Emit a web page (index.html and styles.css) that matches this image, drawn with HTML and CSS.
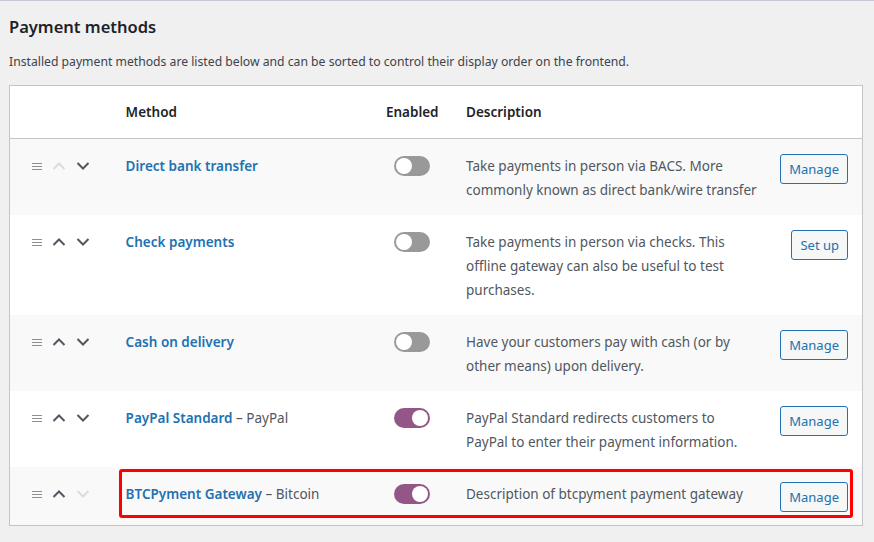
FILE: index.html
```html
<!DOCTYPE html>
<html>
<head>
<meta charset="utf-8">
<link rel="stylesheet" href="styles.css">
</head>
<body>
<div class="page">
  <h2 class="title">Payment methods</h2>
  <p class="intro">Installed payment methods are listed below and can be sorted to control their display order on the frontend.</p>
  <div class="table-wrap">
    <table class="gateways">
      <colgroup>
        <col class="c-sort"><col class="c-name"><col class="c-status"><col class="c-desc"><col class="c-action">
      </colgroup>
      <thead>
        <tr><th></th><th>Method</th><th class="center">Enabled</th><th>Description</th><th></th></tr>
      </thead>
      <tbody>
        <tr>
          <td><div class="sort"><span class="grip"></span><svg class="chev disabled" viewBox="0 0 14 14"><path d="M1.5 10 L7 4.5 L12.5 10"/></svg><svg class="chev" viewBox="0 0 14 14"><path d="M1.5 4 L7 9.5 L12.5 4"/></svg></div></td>
          <td><a class="name">Direct bank transfer</a></td>
          <td><span class="toggle"></span></td>
          <td class="desc">Take payments in person via BACS. More commonly known as direct bank/wire transfer</td>
          <td class="action"><button class="btn">Manage</button></td>
        </tr>
        <tr>
          <td><div class="sort"><span class="grip"></span><svg class="chev" viewBox="0 0 14 14"><path d="M1.5 10 L7 4.5 L12.5 10"/></svg><svg class="chev" viewBox="0 0 14 14"><path d="M1.5 4 L7 9.5 L12.5 4"/></svg></div></td>
          <td><a class="name">Check payments</a></td>
          <td><span class="toggle"></span></td>
          <td class="desc">Take payments in person via checks. This offline gateway can also be useful to test purchases.</td>
          <td class="action"><button class="btn">Set up</button></td>
        </tr>
        <tr>
          <td><div class="sort"><span class="grip"></span><svg class="chev" viewBox="0 0 14 14"><path d="M1.5 10 L7 4.5 L12.5 10"/></svg><svg class="chev" viewBox="0 0 14 14"><path d="M1.5 4 L7 9.5 L12.5 4"/></svg></div></td>
          <td><a class="name">Cash on delivery</a></td>
          <td><span class="toggle"></span></td>
          <td class="desc">Have your customers pay with cash (or by other means) upon delivery.</td>
          <td class="action"><button class="btn">Manage</button></td>
        </tr>
        <tr>
          <td><div class="sort"><span class="grip"></span><svg class="chev" viewBox="0 0 14 14"><path d="M1.5 10 L7 4.5 L12.5 10"/></svg><svg class="chev" viewBox="0 0 14 14"><path d="M1.5 4 L7 9.5 L12.5 4"/></svg></div></td>
          <td><a class="name">PayPal Standard</a><span class="sub"> – PayPal</span></td>
          <td><span class="toggle on"></span></td>
          <td class="desc">PayPal Standard redirects customers to PayPal to enter their payment information.</td>
          <td class="action"><button class="btn">Manage</button></td>
        </tr>
        <tr>
          <td><div class="sort"><span class="grip"></span><svg class="chev" viewBox="0 0 14 14"><path d="M1.5 10 L7 4.5 L12.5 10"/></svg><svg class="chev disabled" viewBox="0 0 14 14"><path d="M1.5 4 L7 9.5 L12.5 4"/></svg></div></td>
          <td><a class="name">BTCPyment Gateway</a><span class="sub"> – Bitcoin</span></td>
          <td><span class="toggle on"></span></td>
          <td class="desc">Description of btcpyment payment gateway</td>
          <td class="action"><button class="btn">Manage</button></td>
        </tr>
      </tbody>
    </table>
    <div class="highlight"></div>
  </div>
</div>
</body>
</html>
```
FILE: styles.css
```css
html, body {
  margin: 0;
  padding: 0;
  background: #f0f0f1;
}
body {
  font-family: "Noto Sans", "Open Sans", sans-serif;
  color: #3c434a;
  border-top: 1px solid #c9c6d6;
}
.page {
  padding: 14px 12px 0 9px;
}
.title {
  margin: 0;
  font-size: 16.5px;
  line-height: 24px;
  font-weight: 600;
  color: #1d2327;
}
.intro {
  margin: 13px 0 0;
  font-size: 12.2px;
  line-height: 20px;
  color: #3c434a;
}
.table-wrap {
  position: relative;
  margin-top: 13px;
}
.gateways {
  width: 854px;
  table-layout: fixed;
  border-collapse: collapse;
  background: #fff;
  border: 1px solid #c3c4c7;
  font-size: 13.5px;
}
.c-sort { width: 100px; }
.c-name { width: 260px; }
.c-status { width: 80px; }
.c-desc { width: 322px; }
.c-action { width: 90px; }
.gateways th {
  text-align: left;
  font-weight: 600;
  color: #1d2327;
  padding: 14px 16px;
  line-height: 24px;
  border-bottom: 1px solid #c3c4c7;
}
.gateways th.center { text-align: center; }
.gateways td {
  padding: 15px 16px 13px;
  line-height: 24px;
    vertical-align: top;
}
.gateways td.desc { padding-right: 14px; }
.gateways td.action { padding-left: 0; padding-right: 14px; }
.gateways tbody tr:nth-child(odd) { background: #f9f9f9; }
.sort {
  display: flex;
  align-items: center;
  height: 24px;
  gap: 10px;
  padding-left: 6px;
}
.grip {
  width: 10px;
  height: 7px;
  border-top: 1px solid #8c8f94;
  border-bottom: 1px solid #8c8f94;
  position: relative;
  box-sizing: border-box;
}
.grip::after {
  content: "";
  position: absolute;
  left: 0; right: 0;
  top: 2px;
  height: 1px;
  background: #8c8f94;
}
.chev {
  width: 14px;
  height: 14px;
  fill: none;
  stroke: #50575e;
  stroke-width: 2;
}
.chev.disabled { stroke: #dcdcde; }
.name {
  color: #2271b1;
  font-weight: 600;
  text-decoration: none;
}
.sub { color: #50575e; }
.toggle {
  display: block;
  width: 36px;
  height: 20px;
  margin: 2px 0 0 8px;
  border-radius: 10px;
  background: #999;
  position: relative;
}
.toggle::after {
  content: "";
  position: absolute;
  top: 2px;
  left: 2px;
  width: 16px;
  height: 16px;
  border-radius: 50%;
  background: #fff;
}
.toggle.on { background: #935687; }
.toggle.on::after { left: 18px; }
.desc { color: #50575e; }
.action { text-align: right; }
.btn {
  font-family: inherit;
  font-size: 13px;
  line-height: 26px;
  height: 30px;
  padding: 0 8px;
  white-space: nowrap;
  color: #2271b1;
  background: #f6f7f7;
  border: 1px solid #2271b1;
  border-radius: 3px;
}
.highlight {
  position: absolute;
  left: 110px;
  top: 384px;
  width: 734px;
  height: 49px;
  box-sizing: border-box;
  border: 3px solid #f00;
  border-radius: 3px;
  pointer-events: none;
}
```
